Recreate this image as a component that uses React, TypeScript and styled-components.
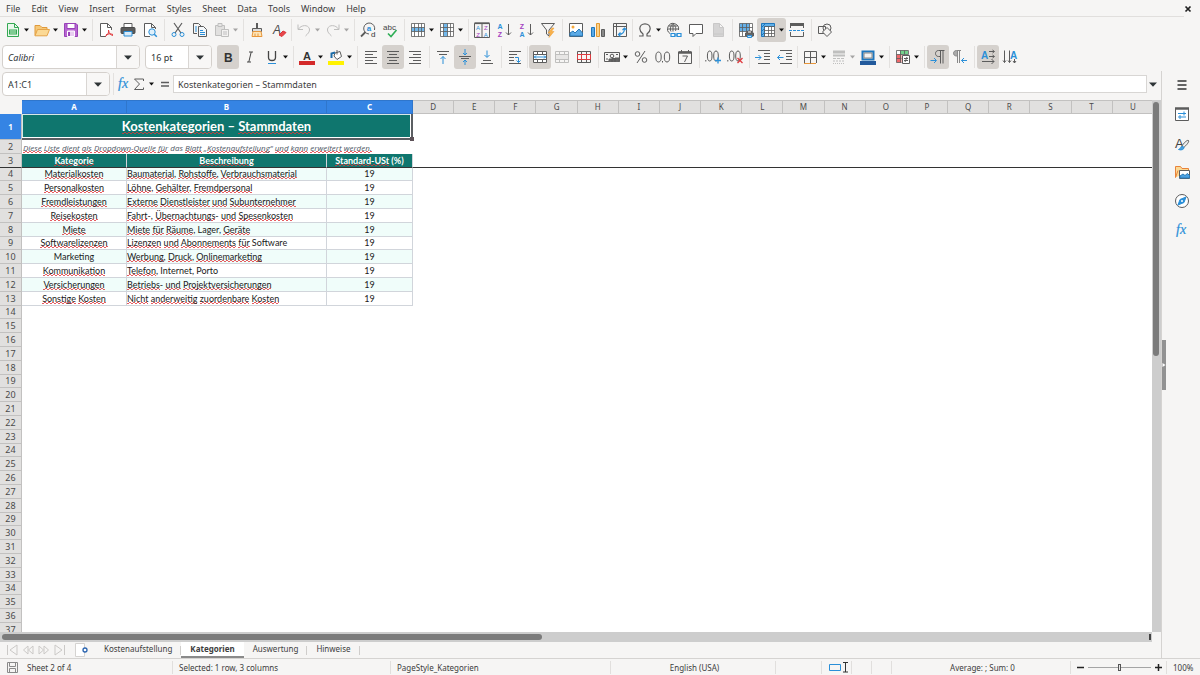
import React from "react";
import styled, { createGlobalStyle, css } from "styled-components";

const ui = '"Noto Sans", "Open Sans", sans-serif';
const cellFont = 'Lato, "Noto Sans", sans-serif';
const ink = "#5c5c5c";
const blue = "#2a8fd8";

const Global = createGlobalStyle`
  * { box-sizing: border-box; }
  body { margin: 0; background: #f6f5f4; color: #3d3d3d; font-family: ${ui}; font-size: 9px; overflow: hidden; }
  button, input, select { font: inherit; color: inherit; margin: 0; padding: 0; border: 0; background: none; }
`;

const Shell = styled.div`
  height: 100vh;
  display: flex;
  flex-direction: column;
`;
const MenuBar = styled.nav`
  height: 17px;
  flex: none;
  display: flex;
  align-items: center;
  gap: 1px;
  padding: 1px 0 0 1px;
  margin-right: 16px;
  border-bottom: 1px solid #e1dfdd;
`;
const MenuItem = styled.button`
  padding: 0 5px;
  line-height: 15px;
`;
const CloseDoc = styled.button`
  margin-left: auto;
  margin-right: -10px;
  width: 10px;
  height: 10px;
  display: flex;
  align-items: center;
`;
const Toolbar = styled.div`
  height: 27px;
  flex: none;
  display: flex;
  align-items: center;
  padding: 0 0 1px 2px;
`;
const Tool = styled.button<{ $on?: boolean; $off?: boolean; $split?: boolean }>`
  width: ${(p) => (p.$split ? 29 : 22)}px;
  height: 24px;
  flex: none;
  display: flex;
  align-items: center;
  gap: 3px;
  padding-left: 3px;
  border-radius: 3px;
  background: ${(p) => (p.$on ? "#d5d1cd" : "transparent")};
  ${(p) => p.$off && css`opacity: 0.35;`}
`;
const Sep = styled.span<{ $narrow?: boolean }>`
  width: 1px;
  height: 22px;
  flex: none;
  margin: 0 ${(p) => (p.$narrow ? 1 : 2)}px 0 ${(p) => (p.$narrow ? 1 : 3)}px;
  background: #e3e1df;
`;
const Combo = styled.div<{ $w: number; $gap: number }>`
  width: ${(p) => p.$w}px;
  height: 24px;
  flex: none;
  display: flex;
  margin-right: ${(p) => p.$gap}px;
  background: #fff;
  border: 1px solid #d4d0cc;
  border-radius: 4px;
  overflow: hidden;
`;
const ComboInput = styled.input<{ $italic?: boolean }>`
  flex: 1;
  min-width: 0;
  padding-left: 5px;
  outline: 0;
  color: #2e3436;
  font-style: ${(p) => (p.$italic ? "italic" : "normal")};
`;
const ComboButton = styled.button`
  width: 23px;
  display: flex;
  align-items: center;
  justify-content: center;
  border-left: 1px solid #d9d6d3;
  background: #f8f7f6;
`;
const Body = styled.div`
  flex: 1;
  min-height: 0;
  display: flex;
`;
const Main = styled.div`
  flex: 1;
  min-width: 0;
  display: flex;
  flex-direction: column;
`;
const FormulaBar = styled.div`
  height: 29px;
  flex: none;
  display: flex;
  align-items: center;
  padding: 0 2px 3px 2px;
`;
const FormulaTool = styled.button<{ $w: number }>`
  width: ${(p) => p.$w}px;
  height: 20px;
  flex: none;
  display: flex;
  align-items: center;
  justify-content: center;
`;
const FormulaInput = styled.input`
  flex: 1;
  min-width: 0;
  height: 18px;
  padding-left: 4px;
  background: #fff;
  border: 1px solid #d8d6d4;
  outline: 0;
`;
const SheetArea = styled.div`
  flex: 1;
  min-height: 0;
  display: flex;
`;
const SheetView = styled.div`
  flex: 1;
  min-width: 0;
  overflow: hidden;
  background: #fff;
`;
const Table = styled.table`
  width: calc(100% + 2px);
  table-layout: fixed;
  border-collapse: separate;
  border-spacing: 0;
  line-height: 12px;
`;
const Col = styled.col<{ $w?: number }>`
  width: ${(p) => (p.$w ? p.$w + "px" : "auto")};
`;
const Corner = styled.td`
  padding: 0;
  background: #f6f5f4;
`;
const ColHead = styled.th<{ $on?: boolean }>`
  height: 14px;
  padding: 0;
  font-size: 8px;
  font-weight: ${(p) => (p.$on ? 700 : 400)};
  color: ${(p) => (p.$on ? "#fff" : "#4a4a4a")};
  background: ${(p) => (p.$on ? "#3584e4" : "#e1e0df")};
  border: solid ${(p) => (p.$on ? "#2f76cc" : "#c2c1c0")};
  border-width: 1px 1px 1px 0;
`;
const Row = styled.tr<{ $h: number; $frozen?: boolean }>`
  > * {
    height: ${(p) => p.$h}px;
    ${(p) => p.$frozen && css`border-bottom: 1px solid #333 !important;`}
  }
`;
const RowHead = styled.th<{ $on?: boolean }>`
  padding: 0;
  font-size: ${(p) => (p.$on ? 8 : 9)}px;
  font-weight: ${(p) => (p.$on ? 700 : 400)};
  color: ${(p) => (p.$on ? "#fff" : "#4a4a4a")};
  background: ${(p) => (p.$on ? "#3584e4" : "#e1e0df")};
  border: solid #c2c1c0;
  border-width: 0 1px 1px 0;
`;
const Blank = styled.td`
  padding: 0;
`;
const TitleCell = styled.td`
  position: relative;
  padding: 0;
  text-align: center;
  font: 700 13px/20px ${cellFont};
  color: #fff;
  background: #0f766e;
  border: solid #5b5f63;
  border-width: 0 2px 2px 0;
  box-shadow: inset -1px -1px 0 #fff, inset 1px 1px 0 #d8e8e6;
`;
const FillHandle = styled.span`
  position: absolute;
  right: -3px;
  bottom: -3px;
  width: 4px;
  height: 4px;
  background: #5d5258;
`;
const NoteCell = styled.td`
  padding: 0 0 0 1px;
  font: italic 400 8px/12px "Open Sans", "Noto Sans", sans-serif;
  color: #4b5563;
  white-space: nowrap;
  vertical-align: bottom;
`;
const HeadCell = styled.td`
  padding: 0;
  text-align: center;
  font: 700 9px/12px ${cellFont};
  color: #fff;
  background: #0f766e;
  border-right: 1px solid #d1d5db;
`;
const Cell = styled.td<{ $tint?: boolean; $left?: boolean }>`
  padding: 0;
  text-align: ${(p) => (p.$left ? "left" : "center")};
  font: 400 9px/12px ${cellFont};
  color: #1a1a1a;
  white-space: nowrap;
  background: ${(p) => (p.$tint ? "#f0fdfa" : "#fff")};
  border: solid #d1d5db;
  border-width: 0 1px 1px 0;
`;
const Misspelt = styled.span`
  background:
    linear-gradient(90deg, #e0353acc 50%, transparent 50%) 0 100% / 4px 1px repeat-x,
    linear-gradient(90deg, transparent 50%, #e0353acc 50%) 0 calc(100% - 1px) / 4px 1px repeat-x;
`;
const VScroll = styled.div`
  width: 9px;
  flex: none;
  padding: 2px 2px 0 1px;
  background: #cdcdcd;
`;
const VThumb = styled.div`
  height: 48%;
  border-radius: 3px;
  background: #7b7b7b;
`;
const HScroll = styled.div`
  height: 10px;
  flex: none;
  display: flex;
  justify-content: space-between;
  align-items: center;
  margin-right: 9px;
  padding: 0 1px 0 2px;
  background: #cdcdcd;
`;
const HThumb = styled.div`
  width: 47%;
  height: 6px;
  border-radius: 3px;
  background: #7b7b7b;
`;
const SplitMark = styled.div`
  width: 2px;
  height: 6px;
  background: #444;
`;
const Tabs = styled.div`
  height: 16px;
  flex: none;
  display: flex;
  align-items: stretch;
  padding-left: 4px;
  font-size: 8px;
`;
const TabNav = styled.button<{ $w: number }>`
  width: ${(p) => p.$w}px;
  display: flex;
  align-items: center;
  justify-content: center;
`;
const Tab = styled.button<{ $on?: boolean; $bar?: boolean }>`
  padding: 0 9px;
  line-height: 14px;
  font-weight: ${(p) => (p.$on ? 700 : 400)};
  background: ${(p) => (p.$on ? "#fff" : "transparent")};
  border-bottom: 2px solid ${(p) => (p.$on ? "#8a8a8a" : "transparent")};
  ${(p) => p.$bar && css`
    background: linear-gradient(#cfcdcb, #cfcdcb) 100% 4px / 1px 9px no-repeat;
  `}
`;
const SideBar = styled.aside`
  width: 39px;
  flex: none;
  display: flex;
  border-left: 1px solid #d5d3d1;
`;
const SideHandle = styled.button`
  width: 4px;
  height: 50px;
  align-self: center;
  display: flex;
  align-items: center;
  background: #929292;
`;
const Deck = styled.div`
  flex: 1;
  display: flex;
  flex-direction: column;
  align-items: center;
  gap: 13px;
  padding: 6px 2px 0 0;
`;
const DeckButton = styled.button`
  height: 16px;
`;
const StatusBar = styled.footer`
  height: 17px;
  flex: none;
  display: grid;
  grid-template-columns: 173fr 218fr 220fr 165fr 46fr 30fr 20fr 20fr 179fr 96fr 33fr;
  align-items: center;
  border-top: 1px solid #d5d3d1;
  font-size: 8px;
`;
const Status = styled.div<{ $center?: boolean }>`
  min-width: 0;
  height: 13px;
  display: flex;
  align-items: center;
  justify-content: ${(p) => (p.$center ? "center" : "flex-start")};
  gap: 8px;
  padding: 0 3px 0 6px;
  border-right: 1px solid #e1dfdd;
  white-space: nowrap;
  &:last-child { border: 0; }
`;
const Zoomer = styled.label`
  min-width: 0;
  height: 13px;
  display: flex;
  align-items: center;
  gap: 4px;
  padding: 0 4px 0 6px;
  border-right: 1px solid #e1dfdd;
`;
const Slider = styled.input`
  flex: 1;
  width: 0;
  min-width: 0;
  height: 10px;
  appearance: none;
  background: linear-gradient(#a5a5a5, #a5a5a5) 0 50% / 100% 1px no-repeat;
  &::-webkit-slider-thumb {
    appearance: none;
    width: 3px;
    height: 7px;
    background: #e8e8e8;
    border: 1px solid #555;
  }
`;

const Svg = ({ children, w = 16, h = 16 }: { children: React.ReactNode; w?: number; h?: number }) => (
  <svg width={w} height={h} viewBox={`0 0 ${w} ${h}`} fill="none" stroke={ink} strokeWidth="1" aria-hidden="true">
    {children}
  </svg>
);
const Arrow = ({ big }: { big?: boolean }) =>
  big ? (
    <svg width="8" height="5" viewBox="0 0 8 5" aria-hidden="true"><path d="M0 .5h8L4 4.8z" fill="#2e3436" /></svg>
  ) : (
    <svg width="5" height="4" viewBox="0 0 5 4" aria-hidden="true"><path d="M0 .5h5L2.5 3.5z" fill="#111" /></svg>
  );

const glyph = (x: number, y: number, s: number, t: string, fill = ink, extra: object = {}) => (
  <text x={x} y={y} fontSize={s} fontFamily="Liberation Sans, sans-serif" fill={fill} stroke="none" {...extra}>{t}</text>
);
const gridLines = "M1.5 1.5h13v13h-13zM1.5 5.5h13M1.5 9.5h13M4.5 1.5v13M8.5 1.5v13M11.5 1.5v13";
const mergeGrid = "M1.5 2.5h13v11h-13zM1.5 5.5h13M1.5 10.5h13M5.5 2.5v3M10.5 2.5v3M5.5 10.5v3M10.5 10.5v3";

const icons: Record<string, React.ReactNode> = {
  new: <><path d="M2.5 1.5h7l4 4v9h-11z" fill="#e9f8ec" stroke="#34a853" /><path d="M9.5 1.5v4h4" stroke="#34a853" /><path d="M4 7.500h8v5H4z" fill="#34a853" stroke="none" /><path d="M5 9h6M5 11h6" stroke="#c9f0d2" /></>,
  open: <><path d="M1 13.500V3.500h5l2 2h5v2" fill="#f6c877" stroke="#e09a3c" /><path d="M1 13.800 3.500 7.500h12l-2.500 6.300z" fill="#fbd995" stroke="#e5a449" /></>,
  save: <><path d="M1.500 1.500h11.500l1.500 1.500v11.500h-13z" fill="#b766d1" stroke="#9842b8" /><path d="M4 1.500h8v5H4z" fill="#fff" stroke="#9842b8" /><path d="M4.500 9h7v5.500h-7z" fill="#e8cdf1" stroke="#fff" /><path d="M6 10v4" stroke="#9842b8" strokeWidth="2" /></>,
  pdf: <><path d="M13.500 8V5.500l-4-4h-7v13H8M9.500 1.500v4h4" fill="#fff" /><path d="M7 14.500c3-1.500 4-4 3.500-6.500M10.500 8c.5 3.500 2 5 4.500 5.500M8 12.800c2-1 4.500-1.300 7-.3" stroke="#e03a3e" /></>,
  print: <><path d="M4 1.500h8v4H4z" fill="#fff" /><rect x="1" y="5.500" width="14" height="6" rx="1" fill="#5b5b5b" stroke="#4a4a4a" /><path d="M4 9.500h8v4.500H4z" fill="#d9ebf8" stroke={blue} /></>,
  preview: <><path d="M8 14.500H2.500v-13h7l4 4V7M9.500 1.500v4h4" fill="#fff" /><circle cx="10" cy="10" r="3.200" fill="#dff0fb" stroke={blue} /><path d="m12.300 12.300 2.500 2.500" stroke={blue} strokeWidth="1.500" /></>,
  cut: <><path d="M4 1 11 11M12 1 5 11" strokeWidth="1.200" /><circle cx="4" cy="12.500" r="2" stroke={blue} /><circle cx="12" cy="12.500" r="2" stroke={blue} /></>,
  copy: <><path d="M5 11.500H1.500v-10h5l2.500 2.500" /><path d="M6.500 4.500h5l3 3v7h-8z" fill="#f4f8fb" /><path d="M8 8.500h3M8 10.500h5M8 12.500h5M3 5h2M3 7h2M3 9h2" stroke={blue} /></>,
  paste: <><path d="M1.500 3.500h9v10h-9z" fill="#bbb" /><path d="M4 1.500h4v3H4z" fill="#ccc" /><path d="M7.500 7.500h7v7h-7z" fill="#eee" /><path d="M9 10h4M9 12h4" /></>,
  clone: <><path d="M8 1v5" strokeWidth="2" /><path d="M3.500 6.500h9v3h-9z" fill="#ddd" /><path d="M4 9.500 3 14.500h10l-1-5z" fill="#fde5b8" stroke="#e8963a" /><path d="M6 14v-2.500M9 14v-2.500" stroke="#e8963a" /></>,
  clear: <>{glyph(2, 12, 12, "A", "#4a4a4a", { fontStyle: "italic" })}<path d="m8 13 4-4 3 1.500-4 4z" fill="#e8474b" stroke="#d93338" /></>,
  undo: <path d="M2 2.500v5h5M2.500 7C5 3 12 2 13.500 7c.5 3-2 5-4 7" />,
  redo: <path d="M14 2.500v5H9M13.500 7C11 3 4 2 2.500 7c-.5 3 2 5 4 7" />,
  find: <><path d="M14.500 8A5.500 5.500 0 1 0 9 12" /><path d="m5.500 10-4.500 4.500" strokeWidth="1.800" />{glyph(6.700, 9, 8, "a", blue, { fontWeight: 700 })}{glyph(11, 14.500, 8, "d", "#333")}</>,
  spell: <>{glyph(1, 8, 8, "abc", "#444")}<path d="m6 11.500 3 3 5.500-6.500" stroke="#2fae56" strokeWidth="1.600" /></>,
  rowIns: <><path d="M1.500 1.500h13v13h-13z" fill="#fff" stroke="none" /><path d="M1.500 5.500h13v4h-13z" fill="#72b8ec" stroke="none" /><path d={gridLines} strokeOpacity=".8" /></>,
  colIns: <><path d="M1.500 1.500h13v13h-13z" fill="#fff" stroke="none" /><path d="M4.500 1.500h4v13h-4z" fill="#72b8ec" stroke="none" /><path d={gridLines} strokeOpacity=".8" /></>,
  sort: <><path d="M.5 1.500h15v14H.5zM8 1.500v14" /><path d="M.5 1.200h15" strokeWidth="1.800" />{glyph(2, 8, 6, "A", blue)}{glyph(2.200, 15, 6, "Z", "#a33fc0")}{glyph(10, 8, 6, "Z", "#a33fc0")}{glyph(9.800, 15, 6, "A", blue)}</>,
  asc: <>{glyph(1.500, 6.800, 7, "A", blue, { fontWeight: 700 })}{glyph(1.700, 14.500, 7, "Z", "#a33fc0", { fontWeight: 700 })}<path d="M12.500 2v11M10 10.500l2.500 2.500 2.500-2.500" /></>,
  desc: <>{glyph(1.700, 6.800, 7, "Z", "#a33fc0", { fontWeight: 700 })}{glyph(1.500, 14.500, 7, "A", blue, { fontWeight: 700 })}<path d="M12.500 2v11M10 10.500l2.500 2.500 2.500-2.500" /></>,
  filter: <><path d="M1.500 1.500h13L9 8v6l-2.500-2V8z" /><path d="m12 6-4 5h2.500L9 15.500l5-6h-2.500L14 6z" fill="#f9b24c" stroke="#ee9a2c" strokeWidth=".5" /></>,
  image: <><path d="M1.500 1.500h13v13h-13z" fill="#fff" /><path d="M2 14v-3l3-2 2 2 4-4 3.500 4v3z" fill="#5baae6" stroke="#2779b8" /><circle cx="5" cy="5" r="1.500" fill="#f6a93b" stroke="none" /></>,
  chart: <><path d="M1.500 5.500h3v9h-3z" fill="#5baae6" stroke="#1f77bd" /><path d="M6.500 1.500h3v13h-3z" fill="#fbd28a" stroke="#e39a33" /><path d="M11.500 7.500h3v7h-3z" fill="#888" /></>,
  pivot: <><path d="M1.500 1.500h13v13h-13zM1.500 4.500h13M4.500 1.500v13" /><path d="M6.500 12.500c4 0 6-2 6-6M10.500 8l2-2 2 2M8.500 10.500l-2 2 2 2" stroke={blue} strokeWidth="1.200" /></>,
  omega: <path d="M2 14h4v-2C3.500 10 2.800 8.500 2.800 6.800 2.800 3.800 5 1.800 8 1.800s5.200 2 5.200 5c0 1.700-.7 3.200-3.200 5.200v2h4" strokeWidth="1.200" />,
  link: <><path d="M4 11.500A5.500 5.500 0 1 1 12.500 8M1.500 7h11M7 1.500v8M2.500 4h9M7 1.500C4 4 4 8 5 9.500M7 1.500C10 4 10 7 9.500 9" /><path d="M5 11.500h4v3H5zM11 11.500h4v3h-4zM8 13h4" fill="#eef6fc" stroke={blue} strokeWidth="1.200" /></>,
  comment: <path d="M1.500 2.500h13v9H8l-3 3v-3H1.500z" fill="#fff" />,
  footer: <path d="M3.500 1.500h6l4 4v9h-10zM4 12h9M9.500 1.500v4h4" fill="#999" stroke="#777" />,
  printRange: <><path d="M1.500 1.500h13v13h-13z" fill="#fff" stroke="none" /><path d="M1.500 1.500h10v8h-10z" fill="#65b0e8" stroke="none" /><path d={gridLines} strokeOpacity=".8" /><path d="M9.500 9h4v3h-4z" fill="#fff" /><path d="M7.500 11h8v3h-8z" fill="#666" /><path d="M9.500 13.500h4v2h-4z" fill="#bfe0f8" stroke={blue} /></>,
  freeze: <><path d="M4.500 4.500h10v10h-10z" fill="#fff" stroke="none" /><path d="M1.500 1.500h13v3h-10v10h-3z" fill="#5fb0ea" stroke="#1f77bd" /><path d="M4.500 4.500h10v10h-10zM4.500 8.500h10M4.500 11.500h10M8.500 4.500v10M11.500 4.500v10" strokeOpacity=".8" /><path d="m2 5 3-3M2 9l3-3M2 13l3-3" stroke="#1f77bd" /></>,
  split: <><path d="M1.500 6V3.500h13V6M1.500 10v4.500h13V10" /><path d="M1 2.500h14" strokeWidth="3" /><path d="M0 8.500h16" stroke={blue} strokeDasharray="3 1" /></>,
  draw: <><path d="M1.500 4.500h7v7h-7z" fill="#f6f5f4" /><circle cx="10" cy="6" r="4" /><path d="m10 5.500 4.500 4.500-4.500 4.500L5.500 10z" fill="#f6f5f4" /></>,
  bold: glyph(4, 12.500, 12, "B", "#333", { fontWeight: 700 }),
  italic: <path d="M7 3h4M5 13h4M9.200 3 6.800 13" stroke="#444" />,
  underline: <><path d="M4.500 2v6.500c0 4 7 4 7 0V2" stroke="#444" strokeWidth="1.300" /><path d="M4 14.500h8" stroke={blue} /></>,
  color: <>{glyph(4, 11, 11, "A", "#333", { fontWeight: 700 })}<path d="M0 14h16" stroke="#d42a2a" strokeWidth="4" /></>,
  highlight: <><path d="m7 4 5-1.500 1.500 5L9 10.500 6 7z" fill="#fff" /><path d="M9 5.500V1" /><path d="M3.500 9V4.500L7 3.500" stroke="#1c6ca8" strokeWidth="2" /><path d="M0 14h16" stroke="#fff200" strokeWidth="4" /></>,
  left: <path d="M2 2.500h12M2 5.500h8M2 8.500h12M2 11.500h8M2 14.500h12" />,
  center: <path d="M2 2.500h12M4 5.500h8M2 8.500h12M4 11.500h8M2 14.500h12" />,
  right: <path d="M2 2.500h12M6 5.500h8M2 8.500h12M6 11.500h8M2 14.500h12" />,
  top: <><path d="M2 2.500h12M4 5.500h8" /><path d="M8 15V7.500M5.500 10 8 7.500l2.500 2.500" stroke={blue} /></>,
  middle: <><path d="M2 7.500h12M4 9.500h8" /><path d="M8 0v5.500M6 4l2 2 2-2M8 16v-4.500M6 13l2-2 2 2" stroke={blue} /></>,
  bottom: <><path d="M4 11.500h8M2 14.500h12" /><path d="M8 1.500V8M5.500 6 8 8.500 10.500 6" stroke={blue} /></>,
  wrap: <><path d="M2 2.500h12M2 5.500h8M2 8.500h5M2 11.500h5M2 14.500h12" /><path d="M8 8.500h3.500v5M9.500 11.500l2 2 2-2" stroke={blue} /></>,
  merge: <><path d="M1.500 2.500h13v11h-13z" fill="#fff" stroke="none" /><path d={mergeGrid} /><path d="M2 8h12M4 6.500 2.500 8 4 9.500M12 6.500 13.500 8 12 9.500" stroke={blue} /></>,
  mergeCells: <><path d="M1.500 5.500h13v5h-13z" fill="#ccc" /><path d={mergeGrid} /></>,
  unmerge: <><path d={mergeGrid} /><path d="M1.500 5.500h13v5h-13zM5.500 5.500v5M10.500 5.500v5" stroke="#dc3b3f" /></>,
  currency: <><path d="M.5 3.500h15v9H.5z" /><circle cx="8" cy="7" r="1.800" /><path d="M5 13v-3h3v3M8 13V9.500h3V13M11 13v-4h4v4" fill="#666" /><path d="M2 5.500h2M2 10h2M12 5.500h2" /></>,
  percent: <><circle cx="4.500" cy="5" r="2.300" /><circle cx="11.500" cy="11" r="2.300" /><path d="m12 2-8 12" /></>,
  number: <><ellipse cx="3.500" cy="8" rx="2.700" ry="5" /><ellipse cx="12" cy="8" rx="2.700" ry="5" /><path d="M7.500 12v1.500" /></>,
  date: <><path d="M1.500 3h13v11.500h-13z" /><path d="M1.500 3.500h13" strokeWidth="2.500" /><path d="M4.500 1v3M11.500 1v3" /><path d="M5.500 7h5l-3 6" /></>,
  addDec: <><path d="M.8 11v1.500" /><ellipse cx="4.700" cy="7" rx="2.300" ry="5" /><ellipse cx="11" cy="7" rx="2.300" ry="5" /><path d="M13 8.500v6M10 11.500h6" stroke={blue} strokeWidth="1.300" /></>,
  delDec: <><path d="M.8 11v1.500" /><ellipse cx="4.700" cy="7" rx="2.300" ry="5" /><ellipse cx="11" cy="7" rx="2.300" ry="5" /><path d="m10.500 9 5 5M15.500 9l-5 5" stroke="#e03a3e" strokeWidth="1.300" /></>,
  indent: <><path d="M3 1.500h12M9 4.500h6M9 7.500h6M9 10.500h6M3 14.500h12" /><path d="M0 8.500h6M3.500 6 6 8.500 3.500 11" stroke={blue} /></>,
  outdent: <><path d="M3 1.500h12M9 4.500h6M9 7.500h6M9 10.500h6M3 14.500h12" /><path d="M6.500 8.500h-6M3 6 .5 8.500 3 11" stroke={blue} /></>,
  borders: <><path d="M2 14.500h12" stroke="#e8963a" /><path d="M2.500 14V2.500h12V14M2.500 8.500h12M8.500 2.500v12" /></>,
  lineStyle: <><path d="M2 3h12" strokeWidth="3" /><path d="M2 6.500h12" strokeWidth="2" /><path d="M2 9.500h12" strokeDasharray="3 1" /><path d="M2 12h12" strokeDasharray="2 1" /><path d="M2 14.500h12" strokeDasharray="1 1" /></>,
  borderColor: <><path d="M2.500 2.500h11v8h-11z" fill="#eee" stroke="#1f77bd" strokeWidth="2" /><path d="M4 4h8v5H4z" fill="#f3f3f3" stroke="#888" /><path d="M0 14h16" stroke="#225a9c" strokeWidth="4" /></>,
  cond: <><path d="M1.500 1.500h12v12h-12z" fill="#fff" stroke="none" /><path d="M5 1.500h8v4H5z" fill="#74d08c" stroke="none" /><path d="M1.500 5.500h5v8h-5z" fill="#f0686b" stroke="none" /><path d="M1.500 1.500h12v4M1.500 1.500v12h5M1.500 5.500h12M1.500 9.500h5M5.500 1.500v12M9.500 1.500v4" strokeOpacity=".8" /><path d="M7.500 6.500h7v8h-7z" fill="#fff" /><path d="M9 9.500h4M9 11.500h4M12 8l-2 5" /></>,
  ltr: <><path d="M13 14.500v-13M10.500 14.500v-13M14.500 1.500H8.500c-4 0-4 6 0 6h2" fill="#d5d1cd" /><path d="M.5 11.500H6M4 9l2.500 2.500L4 14" stroke={blue} /></>,
  rtl: <><path d="M7.500 14v-12M5.500 14v-12M9 1.500H4.500c-4 0-4 5.500 0 5.500h1V2" fill="#aaa" stroke="#888" /><path d="M15 11.500H9.500M12 9l-2.500 2.500L12 14" stroke={blue} /></>,
  horiz: <>{glyph(1, 10, 10, "A", blue, { fontWeight: 700 })}<path d="M9 2.500h5M12.500 1l2 1.500-2 1.500M9 7.500h5M12.500 6l2 1.500-2 1.500M2 12.500h12M11.500 10l2.500 2.500-2.500 2.500" /></>,
  vert: <>{glyph(8, 10, 10, "A", blue, { fontWeight: 700 })}<path d="M2.500 1.500v12M1 11.500l1.500 2 1.500-2M7.500 1.500v12M6 11.500l1.500 2 1.500-2M12.500 10v4M11 12l1.500 2 1.500-2" /></>,
};

type Item = "|" | "!" | [string, string, string?];
// Flags: s = split button with a drop arrow, o = pressed, d = disabled. "!" is the tighter separator.
const standard: Item[] = [
  ["new", "New", "s"], ["open", "Open", "s"], ["save", "Save", "s"], "|",
  ["pdf", "Export as PDF"], ["print", "Print"], ["preview", "Print Preview"], "|",
  ["cut", "Cut"], ["copy", "Copy"], ["paste", "Paste", "sd"], "|",
  ["clone", "Clone Formatting"], ["clear", "Clear Formatting"], "!",
  ["undo", "Undo", "sd"], ["redo", "Redo", "sd"], "|",
  ["find", "Find and Replace"], ["spell", "Spelling"], "|",
  ["rowIns", "Row", "s"], ["colIns", "Column", "s"], "|",
  ["sort", "Sort"], ["asc", "Sort Ascending"], ["desc", "Sort Descending"], ["filter", "AutoFilter"], "|",
  ["image", "Insert Image"], ["chart", "Insert Chart"], ["pivot", "Pivot Table"], "!",
  ["omega", "Special Character", "s"], ["link", "Hyperlink"], ["comment", "Comment"], ["footer", "Headers and Footers", "d"], "|",
  ["printRange", "Define Print Area"], ["freeze", "Freeze Rows and Columns", "so"], ["split", "Split Window"], "|",
  ["draw", "Show Draw Functions"],
];
const formatting: Item[] = [
  ["bold", "Bold", "o"], ["italic", "Italic"], ["underline", "Underline", "s"], "|",
  ["color", "Font Color", "s"], ["highlight", "Background Color", "s"], "|",
  ["left", "Align Left"], ["center", "Center Horizontally", "o"], ["right", "Align Right"], "|",
  ["top", "Align Top"], ["middle", "Center Vertically", "o"], ["bottom", "Align Bottom"], "|",
  ["wrap", "Wrap Text"], "!",
  ["merge", "Merge and Center", "o"], ["mergeCells", "Merge Cells", "d"], ["unmerge", "Unmerge Cells"], "|",
  ["currency", "Currency", "s"], ["percent", "Percent"], ["number", "Number"], ["date", "Date"], "|",
  ["addDec", "Add Decimal Place"], ["delDec", "Delete Decimal Place"], "|",
  ["indent", "Increase Indent"], ["outdent", "Decrease Indent"], "!",
  ["borders", "Borders", "s"], ["lineStyle", "Border Style", "sd"], ["borderColor", "Border Color", "s"], "|",
  ["cond", "Conditional Formatting", "s"], "|",
  ["ltr", "Left-to-Right", "o"], ["rtl", "Right-to-Left"], "|",
  ["horiz", "Text Direction Horizontal", "o"], ["vert", "Text Direction Vertical"],
];
const Tools = ({ items }: { items: Item[] }) => (
  <>
    {items.map((it, i) =>
      typeof it === "string" ? (
        <Sep key={i} $narrow={it === "!"} />
      ) : (
        <Tool key={i} aria-label={it[1]} $split={it[2]?.includes("s")} $on={it[2]?.includes("o")} $off={it[2]?.includes("d")}>
          <Svg>{icons[it[0]]}</Svg>
          {it[2]?.includes("s") && <Arrow />}
        </Tool>
      )
    )}
  </>
);

/* Words between asterisks carry the spell-check underline. */
const Spelled = ({ text }: { text: string }) => (
  <>{text.split("*").map((part, i) => (i % 2 ? <Misspelt key={i}>{part}</Misspelt> : part))}</>
);

const rows: [string, string][] = [
  ["*Materialkosten*", "*Baumaterial*, *Rohstoffe*, *Verbrauchsmaterial*"],
  ["*Personalkosten*", "*Löhne*, *Gehälter*, *Fremdpersonal*"],
  ["*Fremdleistungen*", "*Externe* *Dienstleister* *und* *Subunternehmer*"],
  ["*Reisekosten*", "*Fahrt*-, *Übernachtungs*- *und* *Spesenkosten*"],
  ["*Miete*", "*Miete* *für* *Räume*, Lager, *Geräte*"],
  ["*Softwarelizenzen*", "*Lizenzen* *und* *Abonnements* *für* Software"],
  ["Marketing", "*Werbung*, *Druck*, *Onlinemarketing*"],
  ["*Kommunikation*", "*Telefon*, Internet, Porto"],
  ["*Versicherungen*", "*Betriebs*- *und* *Projektversicherungen*"],
  ["*Sonstige* *Kosten*", "*Nicht* *anderweitig* *zuordenbare* *Kosten*"],
];
const letters = "ABCDEFGHIJKLMNOPQRSTU".split("");
const rowHeight = (n: number) => (n % 5 === 4 ? 13 : 14);

const Sheet = () => (
  <Table>
    <colgroup>
      <Col $w={22} /><Col $w={105} /><Col $w={200} /><Col $w={86} />
      {letters.slice(3).map((l) => <Col key={l} />)}
    </colgroup>
    <thead>
      <tr>
        <Corner />
        {letters.map((l, i) => <ColHead key={l} scope="col" $on={i < 3}>{l}</ColHead>)}
      </tr>
    </thead>
    <tbody>
      <Row $h={26}>
        <RowHead scope="row" $on>1</RowHead>
        <TitleCell colSpan={3}><Spelled text="*Kostenkategorien* – *Stammdaten*" /><FillHandle /></TitleCell>
        <Blank colSpan={18} />
      </Row>
      <Row $h={14}>
        <RowHead scope="row">2</RowHead>
        <NoteCell colSpan={21}>
          <Spelled text="*Diese* *Liste* *dient* *als* *Dropdown-Quelle* *für* das *Blatt* „*Kostenaufstellung*“ *und* *kann* *erweitert* *werden.*" />
        </NoteCell>
      </Row>
      <Row $h={14} $frozen>
        <RowHead scope="row">3</RowHead>
        <HeadCell><Spelled text="*Kategorie*" /></HeadCell>
        <HeadCell><Spelled text="*Beschreibung*" /></HeadCell>
        <HeadCell><Spelled text="*Standard-USt* (%)" /></HeadCell>
        <Blank colSpan={18} />
      </Row>
      {rows.map(([name, text], i) => (
        <Row key={name} $h={rowHeight(i + 4)}>
          <RowHead scope="row">{i + 4}</RowHead>
          <Cell $tint={i % 2 === 0}><Spelled text={name} /></Cell>
          <Cell $tint={i % 2 === 0} $left><Spelled text={text} /></Cell>
          <Cell $tint={i % 2 === 0}>19</Cell>
          <Blank colSpan={18} />
        </Row>
      ))}
      {Array.from({ length: 24 }, (_, i) => (
        <Row key={i} $h={rowHeight(i + 14)}>
          <RowHead scope="row">{i + 14}</RowHead>
          <Blank colSpan={21} />
        </Row>
      ))}
    </tbody>
  </Table>
);

const menus = ["File", "Edit", "View", "Insert", "Format", "Styles", "Sheet", "Data", "Tools", "Window", "Help"];
const fx = (x: number, s: number) => (
  <text x={x} y="12" fontSize={s} fontFamily="Liberation Serif, serif" fontStyle="italic" fill={blue} stroke={blue} strokeWidth=".2">fx</text>
);
const deck: [string, React.ReactNode][] = [
  ["Sidebar Settings", <path d="M3.500 4h9M3.500 8h9M3.500 12h9" stroke="#333" strokeWidth="1.600" />],
  ["Properties", <><path d="M1.500 2.500h13v12h-13z" fill="#fff" /><path d="M1 2.500h14" strokeWidth="2.500" /><path d="M4 7.500h8M10 5.500v4M4 11h8M6 9v4" stroke={blue} /></>],
  ["Styles", <>{glyph(1, 12.500, 13, "A", "#444")}<path d="M14.500 5.500c1 1-2 5-5 7l-1.500-1.500c1.500-3 5.500-6.500 6.500-5.500z" fill="#eee" /><path d="M8.500 11c-2 0-1.500 3-4 3.500 3 1 5.500 0 5.500-2z" fill="#4aa0e0" stroke={blue} /></>],
  ["Gallery", <><path d="M1.500 13.500v-11h5l1.500 2h6.500v3" fill="#fbd995" stroke="#e8833a" /><path d="M1.500 13.500 4 6.500" stroke="#e8833a" /><path d="M5.500 6.500h10v8h-10z" fill="#fff" /><path d="M6 14v-2l3-2 2 1.500 2.500-2 2 2V14z" fill="#4aa0e0" stroke="#2779b8" /></>],
  ["Navigator", <><circle cx="8" cy="8" r="6.500" fill="#fff" /><path d="m12 4-2 5.500L4 12l2-5.500z" fill={blue} stroke={blue} /><circle cx="8" cy="8" r="1" fill="#fff" stroke="none" /></>],
  ["Functions", fx(2, 14)],
];

export default function App() {
  return (
    <Shell>
      <Global />
      <MenuBar>
        {menus.map((m) => <MenuItem key={m}>{m}</MenuItem>)}
        <CloseDoc aria-label="Close Document">
          <svg width="8" height="8" viewBox="0 0 8 8" aria-hidden="true"><path d="m1.500 1.500 5 5M6.500 1.500l-5 5" stroke="#222" strokeWidth="1.700" /></svg>
        </CloseDoc>
      </MenuBar>
      <Toolbar><Tools items={standard} /></Toolbar>
      <Toolbar>
        <Combo $w={138} $gap={5}>
          <ComboInput aria-label="Font Name" defaultValue="Calibri" $italic />
          <ComboButton aria-label="Font list"><Arrow big /></ComboButton>
        </Combo>
        <Combo $w={67} $gap={5}>
          <ComboInput aria-label="Font Size" defaultValue="16 pt" />
          <ComboButton aria-label="Size list"><Arrow big /></ComboButton>
        </Combo>
        <Tools items={formatting} />
      </Toolbar>
      <Body>
        <Main>
          <FormulaBar>
            <Combo $w={108} $gap={2}>
              <ComboInput aria-label="Name Box" defaultValue="A1:C1" />
              <ComboButton aria-label="Name list"><Arrow big /></ComboButton>
            </Combo>
            <Sep $narrow />
            <FormulaTool $w={16} aria-label="Function Wizard"><Svg>{fx(3, 14)}</Svg></FormulaTool>
            <FormulaTool $w={15} aria-label="Select Function"><Svg w={12}><path d="M10.500 5V3h-9l5 5-5 5.500h9v-2" /></Svg></FormulaTool>
            <FormulaTool $w={10} aria-label="Function list"><Arrow /></FormulaTool>
            <FormulaTool $w={17} aria-label="Formula"><Svg w={10}><path d="M1 6.500h8M1 10h8" strokeWidth="1.500" /></Svg></FormulaTool>
            <FormulaInput aria-label="Input line" defaultValue="Kostenkategorien – Stammdaten" />
            <FormulaTool $w={12} aria-label="Expand Formula Bar"><Arrow big /></FormulaTool>
          </FormulaBar>
          <SheetArea>
            <SheetView><Sheet /></SheetView>
            <VScroll><VThumb /></VScroll>
          </SheetArea>
          <HScroll><HThumb /><SplitMark /></HScroll>
          <Tabs>
            {["M2.500 3v10M12 3 5 8l7 5z", "M7 4 2.500 8 7 12zM12 4 7.500 8l4.500 4z", "M2 4l4.500 4L2 12zM7 4l4.500 4L7 12z", "M11.500 3v10M2 3l7 5-7 5z"].map((d, i) => (
              <TabNav key={i} $w={16} aria-label={["First sheet", "Previous sheet", "Next sheet", "Last sheet"][i]}>
                <Svg w={14}><path d={d} stroke="#cbc9c7" /></Svg>
              </TabNav>
            ))}
            <TabNav $w={27} aria-label="Add Sheet">
              <Svg><path d="M1.500 1.500h9v13h-9z" fill="#fff" stroke="#d5d3d1" /><circle cx="11" cy="8" r="2" fill="#fff" stroke="#2a64b0" strokeWidth="1.300" /></Svg>
            </TabNav>
            <Tab $bar>Kostenaufstellung</Tab>
            <Tab $on>Kategorien</Tab>
            <Tab $bar>Auswertung</Tab>
            <Tab $bar>Hinweise</Tab>
          </Tabs>
        </Main>
        <SideBar>
          <SideHandle aria-label="Hide sidebar"><svg width="4" height="6" viewBox="0 0 4 6" aria-hidden="true"><path d="M.5 1v4L3.500 3z" fill="#fff" /></svg></SideHandle>
          <Deck>
            {deck.map(([label, art]) => (
              <DeckButton key={label} aria-label={label}><Svg>{art}</Svg></DeckButton>
            ))}
          </Deck>
        </SideBar>
      </Body>
      <StatusBar>
        <Status>
          <Svg w={13} h={13}><path d="M1.500 1.500h10v10h-10zM3.500 1.500v4h6v-4M3.500 11.500v-4h6v4" stroke="#8a8a8a" /></Svg>
          Sheet 2 of 4
        </Status>
        <Status>Selected: 1 row, 3 columns</Status>
        <Status>PageStyle_Kategorien</Status>
        <Status $center>English (USA)</Status>
        <Status />
        <Status>
          <Svg w={20} h={12}><path d="M1.500 3.500h11v6h-11z" stroke={blue} /><path d="M15 1.500h5M15 11h5M17.500 1.500V11" stroke="#333" /></Svg>
        </Status>
        <Status />
        <Status />
        <Status $center>Average: ; Sum: 0</Status>
        <Zoomer>
          <svg width="7" height="7" viewBox="0 0 7 7" aria-hidden="true"><path d="M0 3.500h7" stroke="#222" strokeWidth="1.500" /></svg>
          <Slider type="range" aria-label="Zoom" defaultValue={50} />
          <svg width="7" height="7" viewBox="0 0 7 7" aria-hidden="true"><path d="M0 3.500h7M3.500 0v7" stroke="#222" strokeWidth="1.500" /></svg>
        </Zoomer>
        <Status>100%</Status>
      </StatusBar>
    </Shell>
  );
}
